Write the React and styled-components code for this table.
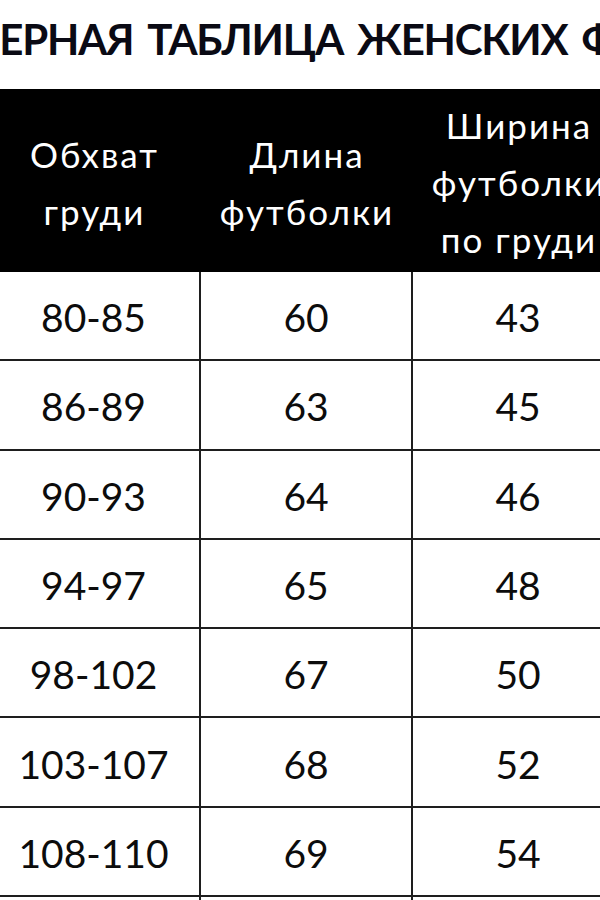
import React from "react";
import styled, { createGlobalStyle } from "styled-components";

const Global = createGlobalStyle`
  html, body { margin: 0; padding: 0; background: #ffffff; }
  body { font-family: Lato, "Open Sans", "Liberation Sans", sans-serif; }
`;

const Page = styled.div`
  width: 600px;
  height: 900px;
  overflow: hidden;
  background: #ffffff;
`;

const TitleBar = styled.div`
  height: 89px;
  box-sizing: border-box;
  padding-top: 17px;
  white-space: nowrap;
`;

const Title = styled.h1`
  margin: 0 0 0 -113px;
  font-family: Lato, "Open Sans", sans-serif;
  font-weight: 700;
  font-size: 42px;
  line-height: 44px;
  color: #0a0a14;
  letter-spacing: -1.2px;
  word-spacing: 5px;
`;

const Table = styled.div`
  margin-left: -12px;
  width: 849px;
  display: flex;
  flex-direction: column;
`;

const cols = "213px 212px 212px 212px";

const HeadRow = styled.div`
  display: grid;
  grid-template-columns: ${cols};
  height: 183px;
  background: #000000;
`;

const HeadCell = styled.div`
  display: flex;
  align-items: center;
  justify-content: center;
  text-align: center;
  color: #ffffff;
  font-size: 35px;
  letter-spacing: 2px;
  line-height: 57px;
  padding-top: 4px;
  box-sizing: border-box;
`;

const Row = styled.div`
  display: grid;
  grid-template-columns: ${cols};
  height: 89.3px;
`;

const Cell = styled.div`
  display: flex;
  align-items: center;
  justify-content: center;
  box-sizing: border-box;
  border-right: 2px solid #1e1e1e;
  border-bottom: 2px solid #1e1e1e;
  color: #0c0c0c;
  font-size: 39px;
  padding-top: 3px;
`;

const headers = [
  ["Обхват", "груди"],
  ["Длина", "футболки"],
  ["Ширина", "футболки", "по груди"],
  ["Длина", "рукава"],
];

const rows = [
  ["80-85", "60", "43", "18"],
  ["86-89", "63", "45", "19"],
  ["90-93", "64", "46", "19"],
  ["94-97", "65", "48", "20"],
  ["98-102", "67", "50", "20"],
  ["103-107", "68", "52", "21"],
  ["108-110", "69", "54", "21"],
  ["111-115", "70", "56", "22"],
];

export default function App() {
  return (
    <Page>
      <Global />
      <TitleBar>
        <Title>РАЗМЕРНАЯ ТАБЛИЦА ЖЕНСКИХ ФУТБОЛОК</Title>
      </TitleBar>
      <Table>
        <HeadRow>
          {headers.map((h, i) => (
            <HeadCell key={i}>
              <div>
                {h.map((l, j) => (
                  <div key={j}>{l}</div>
                ))}
              </div>
            </HeadCell>
          ))}
        </HeadRow>
        {rows.map((r, i) => (
          <Row key={i}>
            {r.map((v, j) => (
              <Cell key={j}>{v}</Cell>
            ))}
          </Row>
        ))}
      </Table>
    </Page>
  );
}
